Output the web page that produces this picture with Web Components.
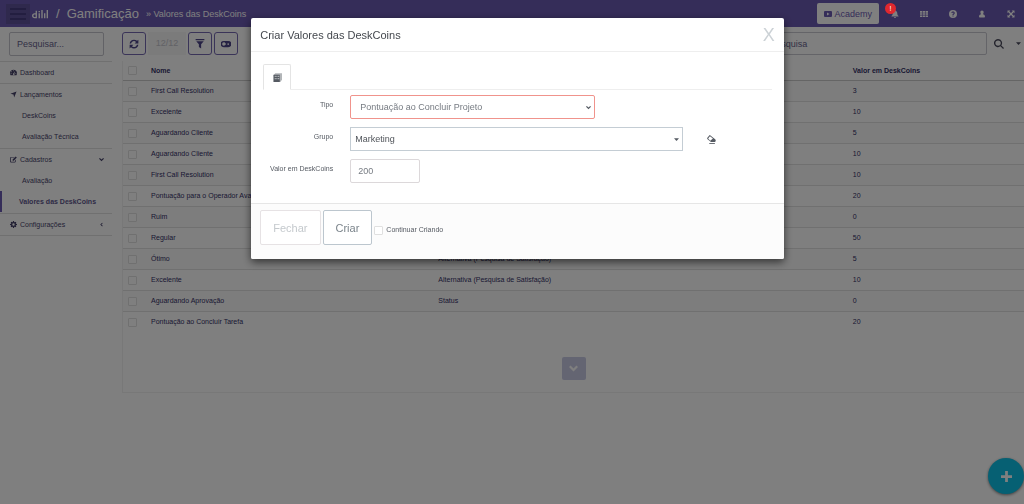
<!DOCTYPE html>
<html lang="pt-BR">
<head>
<meta charset="utf-8">
<meta name="viewport" content="width=device-width, initial-scale=1">
<title>Gamificação » Valores das DeskCoins</title>
<style>
html,body{margin:0;min-height:100%}
body{font-family:"Liberation Sans",Arial,sans-serif;font-size:7px;line-height:10px;background:#fff;color:#46426a;
--brand:#6b5ab2;--ink:#332f66;--line:#e0e0e0;overflow:hidden}
</style>
</head>
<body>
<desk-app></desk-app>
<script>
const ICONS={
bars:'<path d="M0 2h16v2H0zM0 7h16v2H0zM0 12h16v2H0z"/>',
play:'<path fill-rule="evenodd" d="M2.500 2h11C15 2 16 3 16 4.500v7c0 1.500-1 2.500-2.500 2.500h-11C1 14 0 13 0 11.500v-7C0 3 1 2 2.500 2zM6 5v6l5-3z"/>',
bell:'<path d="M8 0c.8 0 1.300.6 1.300 1.300C11.500 2 12.500 4 12.500 6c0 3.500 1 4.500 2.500 6v1H1v-1c1.500-1.500 2.500-2.500 2.500-6 0-2 1-4 3.200-4.700C6.700.6 7.200 0 8 0zM6 14h4a2 2 0 0 1-4 0z"/>',
grid:'<path d="M0 2h4.600v3.300H0zM5.700 2h4.600v3.300H5.700zM11.400 2H16v3.300h-4.600zM0 6.400h4.600v3.300H0zM5.700 6.400h4.600v3.300H5.700zM11.400 6.400H16v3.300h-4.600zM0 10.800h4.600V14H0zM5.700 10.800h4.600V14H5.700zM11.400 10.800H16V14h-4.600z"/>',
help:'<path fill-rule="evenodd" d="M8 0a8 8 0 1 1 0 16A8 8 0 0 1 8 0zM6.900 11v2.200h2.200V11zM4.500 5.600l1.800.9C6.800 5.500 7.300 5 8 5c.7 0 1.200.4 1.200 1 0 1.200-2.300 1.400-2.300 3.600V10h2.200c0-1.500 2.500-1.700 2.500-4.200C11.600 4 10 2.800 8.100 2.800c-1.700 0-2.800.9-3.600 2.800z"/>',
user:'<path d="M8 1c2 0 3.300 1.500 3.300 3.600 0 1.500-.6 2.900-1.500 3.700 2.700.4 4.200 1.900 4.200 5.200 0 .9-.6 1.500-1.500 1.500h-9C2.600 15 2 14.400 2 13.500c0-3.300 1.500-4.800 4.200-5.200C5.300 7.500 4.700 6.100 4.700 4.600 4.700 2.500 6 1 8 1z"/>',
expand:'<path d="M1 1h5.500L4.700 2.800 8 6.100l3.300-3.300L9.500 1H15v5.500l-1.800-1.800L9.900 8l3.300 3.300L15 9.500V15H9.500l1.800-1.800L8 9.900l-3.300 3.300L6.500 15H1V9.500l1.800 1.800L6.100 8 2.800 4.700 1 6.500z"/>',
refresh:'<path d="M1 7C1.400 3.500 4.300 1 8 1c1.900 0 3.600.7 4.900 1.900L15 1v6H9l2.200-2.400C10.300 3.700 9.200 3.200 8 3.200 5.800 3.200 4 4.700 3.400 7zM15 9c-.4 3.500-3.300 6-7 6-1.900 0-3.600-.7-4.900-1.900L1 15V9h6l-2.200 2.400c.9.900 2 1.400 3.200 1.400 2.200 0 4-1.500 4.600-3.800z"/>',
filter:'<path d="M1 0h14v1.800H1zM2 3.500h12L9.800 8.300V15l-3.600-2.200V8.300z"/>',
toggle:'<path fill-rule="evenodd" d="M4.500 3h7a5 5 0 0 1 0 10h-7a5 5 0 0 1 0-10zM4.500 5.300a2.700 2.700 0 1 0 0 5.400c1.500 0 2.300-1 3.500-2.700-1.200-1.700-2-2.700-3.500-2.700zM11.500 6.600a1.400 1.400 0 1 0 0 2.800 1.400 1.400 0 0 0 0-2.800z"/>',
search:'<path fill-rule="evenodd" d="M6.500 0a6.500 6.500 0 0 1 5.200 10.300L16 14.500 14.500 16l-4.200-4.300A6.500 6.500 0 1 1 6.500 0zm0 2.200a4.300 4.300 0 1 0 0 8.600 4.300 4.300 0 0 0 0-8.600z"/>',
gauge:'<path fill-rule="evenodd" d="M8 1.500c4.500 0 8 3.500 8 8 0 1.800-.5 3.300-1.300 4.500H1.300C.5 12.800 0 11.300 0 9.500c0-4.500 3.500-8 8-8zM8 3a1.100 1.100 0 1 0 0 2.200A1.100 1.100 0 0 0 8 3zM3.600 5a1.100 1.100 0 1 0 0 2.200A1.100 1.100 0 0 0 3.600 5zM2.500 9a1.100 1.100 0 1 0 0 2.200A1.100 1.100 0 0 0 2.500 9zm11 0a1.100 1.100 0 1 0 0 2.200 1.100 1.100 0 0 0 0-2.200zM9.700 6l-1.200 3.600a2 2 0 1 0 1.300.4L11 6.400z"/>',
arrow:'<path d="M15 1L9.500 15 8 8 1 6.500z"/>',
edit:'<path fill-rule="evenodd" d="M3 2h7.500L9 3.600H3.200c-.8 0-1.400.6-1.400 1.400v7c0 .8.600 1.400 1.400 1.400h7c.8 0 1.400-.6 1.400-1.400V9.800l1.600-1.600V12c0 1.700-1.200 3-3 3H3c-1.700 0-3-1.300-3-3V5c0-1.700 1.300-3 3-3zM13 1l2.600 2.600L8.600 10.600H6V8z"/>',
gear:'<path fill-rule="evenodd" d="M6.800 0h2.400l.4 2.200 1.400.6L12.900 1.500l1.600 1.700-1.200 1.800.5 1.400 2.200.4v2.400l-2.200.4-.6 1.400 1.300 1.900-1.700 1.600-1.800-1.200-1.400.5L9.200 16H6.800l-.4-2.200-1.400-.6-1.900 1.300-1.600-1.700 1.200-1.800-.5-1.400L0 9.200V6.800l2.200-.4.6-1.400L1.500 3.100l1.700-1.600L5 2.700l1.400-.5zM8 5.300a2.700 2.700 0 1 0 0 5.400 2.700 2.700 0 0 0 0-5.400z"/>',
down:'<path d="M0 5.500L2.700 2.800 8 8l5.300-5.200L16 5.500l-8 8z"/>',
left:'<path d="M10 2l2 1.800L7.500 8l4.500 4.200L10 14 4 8z"/>',
caret:'<path d="M0 4h16L8 12.500z"/>',
plus:'<path d="M6 0h4v6h6v4h-6v6H6v-6H0V6h6z"/>',
book:'<path d="M1 4l3-3.500h12V12l-3 4H1z" opacity=".45"/><path fill-rule="evenodd" d="M1 3h11v13H1zm2 2v2h2V5zm3 0v2h2V5zm3 0v2h2V5zM3 9v2h2V9zm3 0v2h2V9zm3 0v2h2V9z"/>',
eraser:'<path fill-rule="evenodd" d="M5 0l9.500 7.500c1 1 1.500 2.500.5 4l-.8.800H7L1 7.500c-1-1-1-2 0-3L4 .8c.3-.4.600-.6 1-.8zm.3 2.200L2.400 5.600c-.3.4-.3.800 0 1.100L5.800 10l4.700-3.800z"/><path d="M4 14.500h10V16H4z"/>',
logo:'<path fill-rule="evenodd" d="M5 3.500h1.800V14H3.600C1.500 14 0 12.600 0 10.500S1.500 7 3.600 7H5zM5 8.800H3.800C2.700 8.800 2 9.500 2 10.500s.7 1.700 1.800 1.700H5zM9 7h1.900v7H9zM9 3.800h1.900v1.800H9zM12.800 2.500h1.900V14h-1.900zM16.500 7h1.900v7h-1.900zM20.100 2.500H22V14h-1.900z"/>'
};
function define(name,html,init){
  const tpl=document.createElement('template');
  tpl.innerHTML=html;
  customElements.define(name,class extends HTMLElement{
    connectedCallback(){
      if(this.shadowRoot)return;
      const root=this.attachShadow({mode:'open'});
      root.append(tpl.content.cloneNode(true));
      if(init)init(root,this);
    }
  });
}
const RESET='*{box-sizing:border-box}button,input,select{font:inherit;color:inherit;margin:0}button{display:inline-flex;align-items:center;justify-content:center;padding:0;border:0;background:none}a{color:inherit;text-decoration:none}input[type=checkbox]{appearance:none;display:block;width:9px;height:9px;flex:none;border:1px solid #e0e0e0;border-radius:1px;background:#fff}';

define('ui-icon',`<style>:host{display:inline-block;width:var(--size,8px);height:var(--size,8px);flex:none}svg{display:block;width:100%;height:100%;fill:currentColor}</style><svg aria-hidden="true"></svg>`,(root,el)=>{
  const svg=root.querySelector('svg'),n=el.getAttribute('name');
  svg.setAttribute('viewBox',n==='logo'?'0 0 22 16':'0 0 16 16');
  svg.innerHTML=ICONS[n];
});

define('app-header',`<style>${RESET}
:host{display:flex;align-items:center;height:27px;padding:0 9px 0 6px;background:var(--brand);color:#fff;font-size:9px}
.menu{width:24px;height:20px;background:#5f529a;color:#463c80;--size:16px}
.logo{width:16px;height:14px;margin-left:2px}
h1{margin:0 0 0 8px;font-size:13px;line-height:16px;font-weight:400;display:flex;gap:7px}
.crumb{margin-left:7px}
.academy{margin-left:auto;height:21px;padding:0 7px;gap:2px;border-radius:2px;background:#fff;color:var(--brand)}
nav{display:flex;gap:21px;margin-left:12px}
nav button{position:relative;width:8px;height:8px}
nav button ui-icon{--size:8px}
.badge{position:absolute;left:-6px;top:-7px;width:11px;height:11px;border-radius:50%;background:#e0282e;color:#fff;font-size:7px;line-height:11px;text-align:center;z-index:1}
</style>
<button class="menu" aria-label="Menu"><ui-icon name="bars"></ui-icon></button>
<ui-icon class="logo" name="logo"></ui-icon>
<h1><span>/</span><span>Gamificação</span></h1><span class="crumb">» Valores das DeskCoins</span>
<button class="academy"><ui-icon name="play"></ui-icon>Academy</button>
<nav aria-label="Atalhos"><button aria-label="Notificações"><ui-icon name="bell"></ui-icon><span class="badge">!</span></button><button aria-label="Aplicativos"><ui-icon name="grid"></ui-icon></button><button aria-label="Ajuda"><ui-icon name="help"></ui-icon></button><button aria-label="Usuário"><ui-icon name="user"></ui-icon></button><button aria-label="Tela cheia"><ui-icon name="expand"></ui-icon></button></nav>`);

define('side-nav',`<style>${RESET}
:host{display:block;width:112px;padding-top:5px;flex:none}
input{display:block;width:95px;height:24px;margin:0 0 5px 9px;padding:0 7px;border:1px solid #c4c4cc;border-radius:2px;font-size:9px;background:#fff}
input::placeholder{color:#66628c;opacity:1}
nav{border-top:1px solid var(--line)}
section{border-bottom:1px solid var(--line)}
a{display:flex;align-items:center;height:21px}
.top{padding:0 8px 0 10px;gap:3px;--size:7px}
.top .more{margin-left:auto;--size:5px}
ul{list-style:none;margin:0;padding:0 0 1px}
li a{padding-left:22px}
li a[aria-current]{border-left:2px solid var(--brand);padding-left:17px;font-weight:700;color:#5d558c}
</style>
<input type="search" placeholder="Pesquisar..." aria-label="Pesquisar no menu">
<nav aria-label="Principal">
<section><a class="top" href="#"><ui-icon name="gauge"></ui-icon>Dashboard</a></section>
<section><a class="top" href="#"><ui-icon name="arrow"></ui-icon>Lançamentos</a><ul><li><a href="#">DeskCoins</a></li><li><a href="#">Avaliação Técnica</a></li></ul></section>
<section><a class="top" href="#"><ui-icon name="edit"></ui-icon>Cadastros<ui-icon class="more" name="down"></ui-icon></a><ul><li><a href="#">Avaliação</a></li><li><a href="#" aria-current="page">Valores das DeskCoins</a></li></ul></section>
<section><a class="top" href="#"><ui-icon name="gear"></ui-icon>Configurações<ui-icon class="more" name="left"></ui-icon></a></section>
</nav>`);

define('tool-bar',`<style>${RESET}
:host{display:flex;align-items:center;gap:2px;padding:5px 3px 6px 0;font-size:9px;color:var(--brand)}
button.box{width:24px;height:23px;border:1px solid #7468b0;border-radius:3px;background:#fff;color:#4c4488;--size:10px}
.count{width:38px;height:23px;line-height:23px;text-align:center;background:#f6f6f6;color:#c4c4cc}
input{width:25%;height:23px;margin-left:auto;padding:0 7px;border:1px solid #c8c8d0;border-radius:2px;background:#fff}
input::placeholder{color:#66628c;opacity:1}
.find{margin:0 10px 0 5px;color:#4a4a5c;--size:10px}
.caret{color:#4a4a5c;--size:5px}
</style>
<button class="box" aria-label="Atualizar"><ui-icon name="refresh"></ui-icon></button><span class="count">12/12</span><button class="box" aria-label="Filtrar"><ui-icon name="filter"></ui-icon></button><button class="box" aria-label="Alternar"><ui-icon name="toggle"></ui-icon></button>
<input type="search" placeholder="Pesquisa" aria-label="Pesquisa"><button class="find" aria-label="Buscar"><ui-icon name="search"></ui-icon></button><button class="caret" aria-label="Opções"><ui-icon name="caret"></ui-icon></button>`);

define('coin-table',`<style>${RESET}
:host{display:block;padding-bottom:12px;border:1px solid #f0f0f0;border-width:0 0 1px 1px;color:var(--ink)}
table{width:100%;border-collapse:separate;border-spacing:0;table-layout:fixed}
th,td{height:21px;padding:0;text-align:left;vertical-align:middle;white-space:nowrap;border-bottom:1px solid var(--line)}
th{height:20px;border-color:#cacaca}
tbody tr:nth-child(odd){background:#fafafa}
tbody tr:last-child td{border-color:transparent}
.c{width:28px;padding-left:5px}.m{width:46%}.v{width:19%}
button{display:flex;width:24px;height:23px;margin:24px auto 0;border-radius:2px;background:#c9cae4;color:#fff;--size:9px}
</style>
<table><thead><tr><th class="c"><input type="checkbox" aria-label="Selecionar todos"></th><th>Nome</th><th class="m"></th><th class="v">Valor em DeskCoins</th></tr></thead><tbody></tbody></table>
<button aria-label="Carregar mais"><ui-icon name="down"></ui-icon></button>`,root=>{
  const alt='Alternativa (Pesquisa de Satisfação)';
  const rows=[['First Call Resolution','',3],['Excelente','',10],['Aguardando Cliente','',5],['Aguardando Cliente','',10],['First Call Resolution','',10],['Pontuação para o Operador Avaliado','',20],['Ruim','',0],['Regular','',50],['Ótimo',alt,5],['Excelente',alt,10],['Aguardando Aprovação','Status',0],['Pontuação ao Concluir Tarefa','',20]];
  root.querySelector('tbody').innerHTML=rows.map(r=>`<tr><td class="c"><input type="checkbox" aria-label="Selecionar ${r[0]}"></td><td>${r[0]}</td><td>${r[1]}</td><td>${r[2]}</td></tr>`).join('');
});

define('form-row',`<style>:host{display:grid;grid-template-columns:70px 1fr;column-gap:17px;margin-bottom:8px}
.l{text-align:right;padding-top:5px}.f{display:flex;align-items:center;height:24px}</style><div class="l"><slot name="label"></slot></div><div class="f"><slot></slot></div>`);

define('value-dialog',`<style>${RESET}
:host{display:block;width:52vw;border-radius:2px;background:#fff;color:#555a62;box-shadow:0 3px 9px rgba(0,0,0,.6)}
header{display:flex;align-items:center;justify-content:space-between;height:34px;padding:0 9px;border-bottom:1px solid #eee}
h2{margin:0;font-size:11px;line-height:14px;font-weight:400;color:#44484e}
.x{font-size:18px;line-height:20px;color:#ccd2d6}
.body{padding:12px 12px 12px}
.tabs{display:flex;height:26px;margin-bottom:5px;border-bottom:1px solid #eee}
.tabs button{width:28px;height:26px;border:1px solid #e4e4e4;border-bottom-color:#fff;border-radius:2px 2px 0 0;background:#fff;--size:9px}
.pick{display:grid;align-items:center}
.pick>*{grid-area:1/1}
.pick ui-icon{justify-self:end;margin-right:4px;--size:5px;pointer-events:none}
select,input[type=text]{appearance:none;display:block;width:100%;height:24px;border:1px solid #dcd8da;border-radius:2px;background:#fff;padding:0 7px;font-size:9px;color:#767b82}
.tipo{width:58%}.tipo select{border-color:#f0938c;padding:0 9px}
.grupo{width:79%}.grupo select{border-color:#c4cdd4;border-radius:0;padding:0 4px;color:#50545a}
.valor{width:70px!important}
.clear{margin-left:24px;--size:9px}
footer{display:flex;align-items:flex-start;gap:2px;padding:6px 9px 14px;border-top:1px solid #e6e6e6;background:#fcfcfc;border-radius:0 0 2px 2px}
footer button{height:35px;padding:0 12px;font-size:11px;border:1px solid #e6e2e4;border-radius:2px;background:#fff;color:#c4c9cd}
footer .ok{border-color:#bcc6ce;color:#7b848b}
.keep{display:flex;align-items:center;gap:3px;margin-top:15px}
</style>
<header><h2>Criar Valores das DeskCoins</h2><button class="x" aria-label="Fechar janela">X</button></header>
<div class="body"><div class="tabs" role="tablist"><button role="tab" aria-selected="true" aria-label="Dados"><ui-icon name="book"></ui-icon></button></div>
<form-row><label slot="label" for="tipo">Tipo</label><div class="pick tipo"><select id="tipo"><option>Pontuação ao Concluir Projeto</option></select><ui-icon name="down"></ui-icon></div></form-row>
<form-row><label slot="label" for="grupo">Grupo</label><div class="pick grupo"><select id="grupo"><option>Marketing</option></select><ui-icon name="caret"></ui-icon></div><button class="clear" aria-label="Limpar grupo"><ui-icon name="eraser"></ui-icon></button></form-row>
<form-row><label slot="label" for="valor">Valor em DeskCoins</label><input class="valor" id="valor" type="text" value="200"></form-row></div>
<footer><button>Fechar</button><button class="ok">Criar</button><label class="keep"><input type="checkbox">Continuar Criando</label></footer>`);

define('desk-app',`<style>${RESET}
:host{display:block}
.cols{display:flex}
main{flex:1;min-width:0;padding-left:10px}
.fab{position:fixed;right:0;bottom:10px;width:36px;height:36px;border-radius:50%;background:#0cc0e6;color:#fff;box-shadow:0 1px 3px rgba(0,0,0,.5);--size:11px}
.veil{position:fixed;inset:0;display:flex;justify-content:center;align-items:flex-start;padding:18px 0 0 11px;background:rgba(0,0,0,.5)}
</style>
<app-header></app-header>
<div class="cols"><side-nav></side-nav><main><tool-bar></tool-bar><coin-table></coin-table></main></div>
<button class="fab" aria-label="Adicionar"><ui-icon name="plus"></ui-icon></button>
<div class="veil"><value-dialog role="dialog" aria-label="Criar Valores das DeskCoins"></value-dialog></div>`);
</script>
</body>
</html>
